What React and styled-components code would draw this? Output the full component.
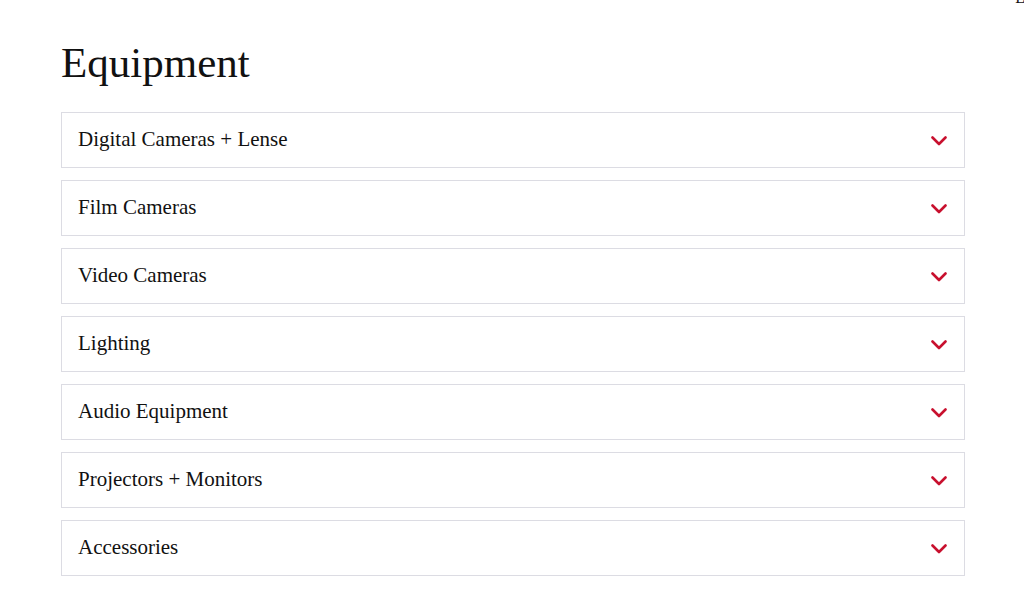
import React from 'react'
import styled, { createGlobalStyle } from 'styled-components'

const GlobalStyle = createGlobalStyle`
    body {
        margin: 0;
        background: #ffffff;
        font-family: "Liberation Serif", "Times New Roman", serif;
        color: #111111;
    }
`

const items = [
    'Digital Cameras + Lense',
    'Film Cameras',
    'Video Cameras',
    'Lighting',
    'Audio Equipment',
    'Projectors + Monitors',
    'Accessories',
]

export default function App() {
    return (
        <>
            <GlobalStyle />
            <Page>
                <Corner>L</Corner>
                <Title>Equipment</Title>
                <List>
                    {items.map(label => (
                        <Item key={label}>
                            <Label>{label}</Label>
                            <Chevron />
                        </Item>
                    ))}
                </List>
            </Page>
        </>
    )
}

const Chevron = () => (
    <ChevronSvg viewBox="0 0 16 10" width="16" height="10">
        <path d="M1.5 1.5 L8 8 L14.5 1.5" fill="none" stroke="#c8102e" strokeWidth="2.6" strokeLinecap="round" strokeLinejoin="round" />
    </ChevronSvg>
)

const Page = styled.div`
    position: relative;
    width: 1024px;
    height: 615px;
    overflow: hidden;
    padding: 38px 59px 0 61px;
    box-sizing: border-box;
`

const Corner = styled.span`
    position: absolute;
    top: -11px;
    right: -1px;
    font-size: 16px;
    color: #111;
`

const Title = styled.h1`
    margin: 0 0 24px;
    font-size: 43px;
    font-weight: 400;
    line-height: 50px;
    letter-spacing: 0;
`

const List = styled.div`
    display: flex;
    flex-direction: column;
    gap: 12px;
`

const Item = styled.div`
    display: flex;
    align-items: center;
    justify-content: space-between;
    height: 56px;
    box-sizing: border-box;
    border: 1px solid #dcdce3;
    padding: 0 17px 0 16px;
    cursor: pointer;
`

const Label = styled.span`
    font-size: 21px;
    line-height: 24px;
    margin-top: -3px;
`

const ChevronSvg = styled.svg`
    display: block;
    margin-top: 2px;
`
